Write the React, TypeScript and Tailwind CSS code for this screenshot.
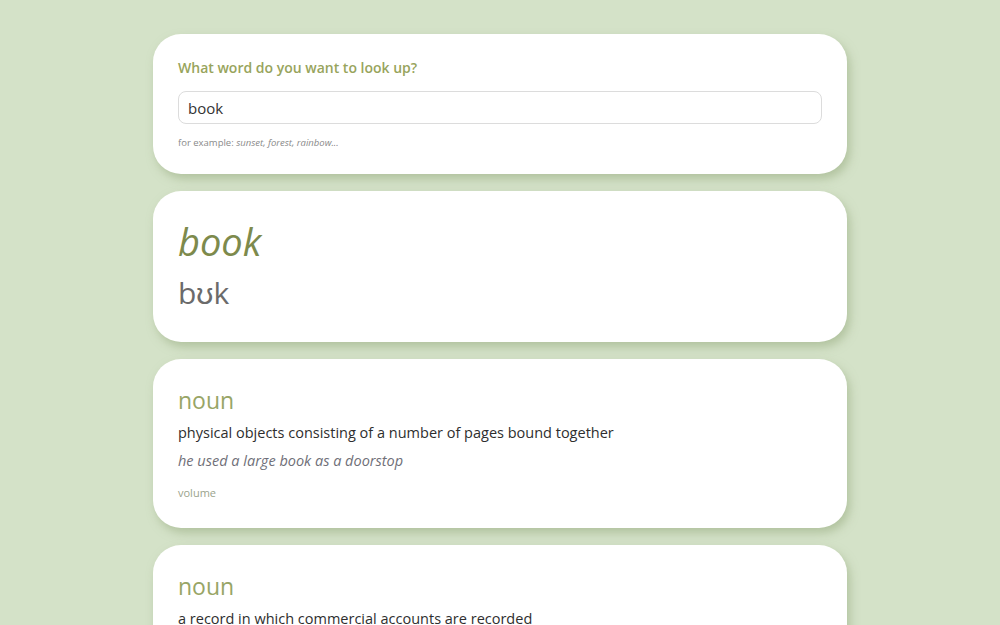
import React from "react";

const meanings = [
  {
    pos: "noun",
    definition: "physical objects consisting of a number of pages bound together",
    example: "he used a large book as a doorstop",
    synonyms: "volume",
  },
  {
    pos: "noun",
    definition: "a record in which commercial accounts are recorded",
    example: "they got a subpoena to examine our books",
    synonyms: "ledger, leger, account book, book of account",
  },
];

function Card({ children, className }: { children: React.ReactNode; className?: string }) {
  return (
    <section
      className={`rounded-[28px] bg-white px-[25px] shadow-[3px_5px_10px_rgba(150,170,125,0.55)] ${className ?? ""}`}
    >
      {children}
    </section>
  );
}

export default function App() {
  return (
    <div className="min-h-screen bg-[#d4e2c8] pt-[34px] pb-10 font-['Open_Sans',sans-serif]">
      <main className="mx-auto flex w-[694px] flex-col gap-[17px]">
        <Card className="pt-[23px] pb-[24px]">
          <h1 className="text-[14px] leading-[22px] font-semibold text-[#98a45c]">
            What word do you want to look up?
          </h1>
          <input
            type="search"
            defaultValue="book"
            className="mt-[12px] block h-[33px] w-full rounded-[8px] border border-[#dcdcdc] px-[9px] text-[15px] text-[#333] outline-none"
          />
          <p className="mt-[12px] text-[9.5px] leading-[14px] text-[#8a8a8a]">
            for example: <em>sunset, forest, rainbow...</em>
          </p>
        </Card>

        <Card className="pt-[26px] pb-[30px]">
          <h2 className="text-[38px] leading-[48px] font-medium text-[#7d8a4c] italic">book</h2>
          <p className="mt-[9px] text-[30px] leading-[38px] text-[#6b6b6b]">bʊk</p>
        </Card>

        {meanings.map((m, i) => (
          <Card key={i} className="pt-[26px] pb-[27px]">
            <h3 className="text-[23px] leading-[30px] font-medium text-[#98a566]">{m.pos}</h3>
            <p className="mt-[7px] text-[14.5px] leading-[22px] text-[#2e2e2e]">{m.definition}</p>
            <p className="mt-[6px] text-[14.5px] leading-[22px] text-[#6f6f78] italic">{m.example}</p>
            <p className="mt-[13px] text-[11px] leading-[16px] text-[#9aa38c]">{m.synonyms}</p>
          </Card>
        ))}
      </main>
    </div>
  );
}
